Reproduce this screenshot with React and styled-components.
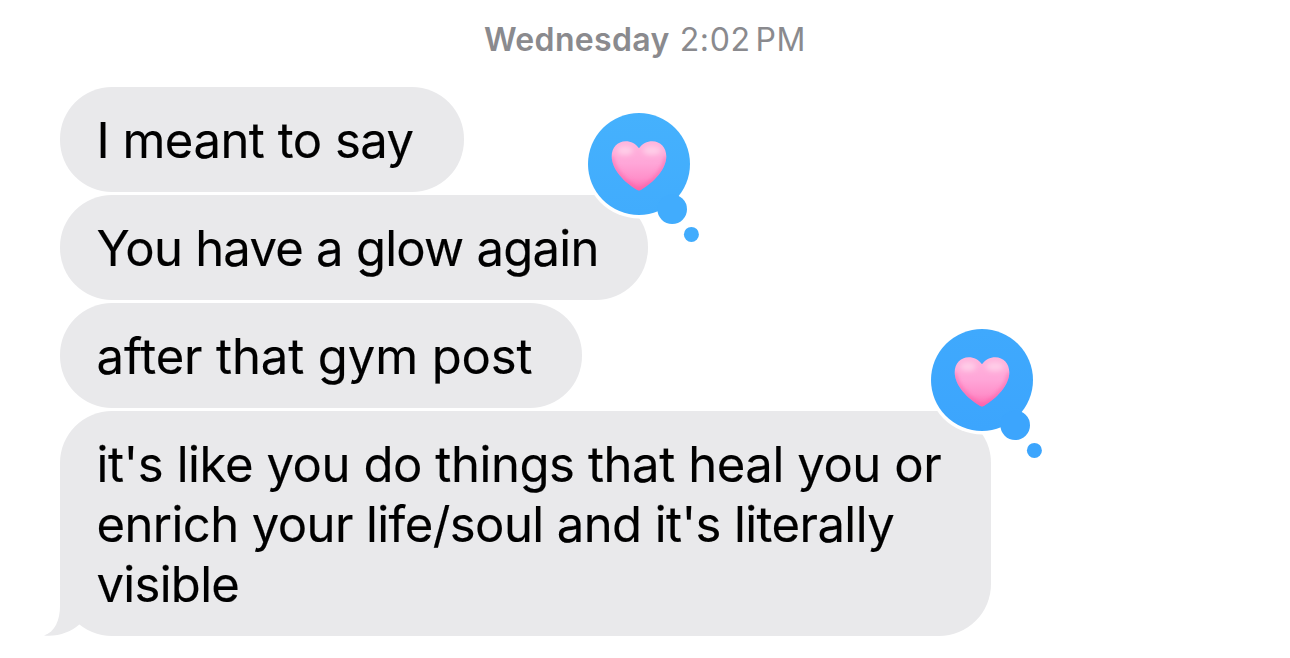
import { useId } from 'react';

// styled
import styled, { createGlobalStyle } from 'styled-components';

const MESSAGES = [
    { id: 1, width: 404, lines: [{ text: 'I meant to say', spacing: -0.5 }] },
    { id: 2, width: 588, lines: [{ text: 'You have a glow again', spacing: -0.75 }], reaction: ['#45b1fd', '#41acfd'] },
    { id: 3, width: 522, lines: [{ text: 'after that gym post', spacing: -0.12 }] },
    {
        id: 4,
        width: 931,
        tail: true,
        lines: [
            { text: "it's like you do things that heal you or", spacing: -0.42 },
            { text: "enrich your life/soul and it's literally", spacing: -0.58 },
            { text: 'visible', spacing: -0.7 },
        ],
        reaction: ['#3fa9fd', '#3ca5fd'],
    },
];

const HEART = 'M55 39.3C58.2 34.7 63 32.2 68.3 32.2C76.5 32.2 82.3 38.6 82.3 47.2C82.3 60.4 69.4 73.4 57.2 80.7C55.8 81.6 54.2 81.6 52.8 80.7C40.6 73.4 27.7 60.4 27.7 47.2C27.7 38.6 33.5 32.2 41.7 32.2C47 32.2 51.8 34.7 55 39.3Z';

const HeartReaction = ({ colors }) => {
    const id = useId();

    return (
        <Reaction viewBox="0 0 120 136">
            <defs>
                <linearGradient id={id + 'bg'} x1="0" y1="0" x2="0" y2="1">
                    <stop offset="0" stopColor={colors[0]} />
                    <stop offset="1" stopColor={colors[1]} />
                </linearGradient>
                <linearGradient id={id + 'heart'} x1="0" y1="0" x2="0" y2="1">
                    <stop offset="0" stopColor="#ffb6dd" />
                    <stop offset="0.45" stopColor="#ffa6d8" />
                    <stop offset="0.75" stopColor="#ff90ca" />
                    <stop offset="1" stopColor="#ff6bb0" />
                </linearGradient>
                <clipPath id={id + 'clip'}>
                    <path d={HEART} />
                </clipPath>
                <filter id={id + 'soft'} x="-30%" y="-30%" width="160%" height="160%">
                    <feGaussianBlur stdDeviation="2.4" />
                </filter>
            </defs>
            <circle cx="55" cy="55" r="54.5" fill="#fff" />
            <circle cx="55" cy="55" r="51" fill={`url(#${id}bg)`} />
            <circle cx="88.2" cy="100.3" r="14.8" fill={colors[1]} />
            <circle cx="107.4" cy="125.4" r="7.5" fill={colors[1]} />
            <path d={HEART} fill={`url(#${id}heart)`} />
            <g clipPath={`url(#${id}clip)`}>
                <g filter={`url(#${id}soft)`}>
                    <path d="M27 48C28 61 42 75 55 82C68 75 82 61 83 48" fill="none" stroke="#fb5ca6" strokeWidth="3" />
                    <ellipse cx="41" cy="41.5" rx="8" ry="4.5" fill="#ffcde8" />
                    <ellipse cx="68" cy="41.5" rx="9" ry="4.5" fill="#ffcde8" />
                </g>
            </g>
        </Reaction>
    );
};

const App = () => {
    return (
        <Thread>
            <GlobalStyle />
            <Timestamp>
                <Day>Wednesday</Day>
                <Time>2:02</Time>
                <Time>PM</Time>
            </Timestamp>
            <MessageList>
                {MESSAGES.map((message) => (
                    <Bubble key={message.id} $width={message.width}>
                        {message.lines.map((line) => (
                            <Line key={line.text} $spacing={line.spacing}>{line.text}</Line>
                        ))}
                        {message.tail && (
                            <Tail viewBox="0 0 70 70">
                                <path d="M16 0V20C16 34 11 46 0 49.6C14 51 27 46 35.5 38.3L44 32V0Z" />
                            </Tail>
                        )}
                        {message.reaction && <HeartReaction colors={message.reaction} />}
                    </Bubble>
                ))}
            </MessageList>
        </Thread>
    );
};

const GlobalStyle = createGlobalStyle`
body {
    margin: 0;
    background: #fff;
}
`;

const Thread = styled.div`
display: flex;
flex-direction: column;
box-sizing: border-box;
width: 1290px;
height: 658px;
padding-top: 20px;
overflow: hidden;
background: #fff;
font-family: Inter, 'Liberation Sans', sans-serif;
`;

const Timestamp = styled.div`
display: flex;
justify-content: center;
height: 40px;
margin-bottom: 27px;
color: #8a8a8e;
font-size: 32px;
line-height: 40px;
`;

const Day = styled.span`
margin-right: 10px;
font-weight: 600;
letter-spacing: 0.35px;
`;

const Time = styled.span`
margin-right: 5px;
letter-spacing: 0.6px;
&:last-child {
    margin-right: 0;
}
`;

const MessageList = styled.div`
display: flex;
flex-direction: column;
align-items: flex-start;
gap: 3px;
padding-left: 60px;
`;

const Bubble = styled.div`
position: relative;
box-sizing: border-box;
width: ${(props) => props.$width}px;
padding: 24px 0 21px 36.5px;
border-radius: 52px;
background: #e9e9eb;
`;

const Line = styled.div`
width: max-content;
color: #000;
font-size: 49px;
line-height: 60px;
letter-spacing: ${(props) => props.$spacing}px;
white-space: nowrap;
-webkit-text-stroke: 0.15px #000;
`;

const Tail = styled.svg`
position: absolute;
left: -16px;
bottom: -20px;
width: 70px;
height: 70px;
fill: #e9e9eb;
`;

const Reaction = styled.svg`
position: absolute;
top: -86px;
right: -56px;
width: 120px;
height: 136px;
`;

export default App;
